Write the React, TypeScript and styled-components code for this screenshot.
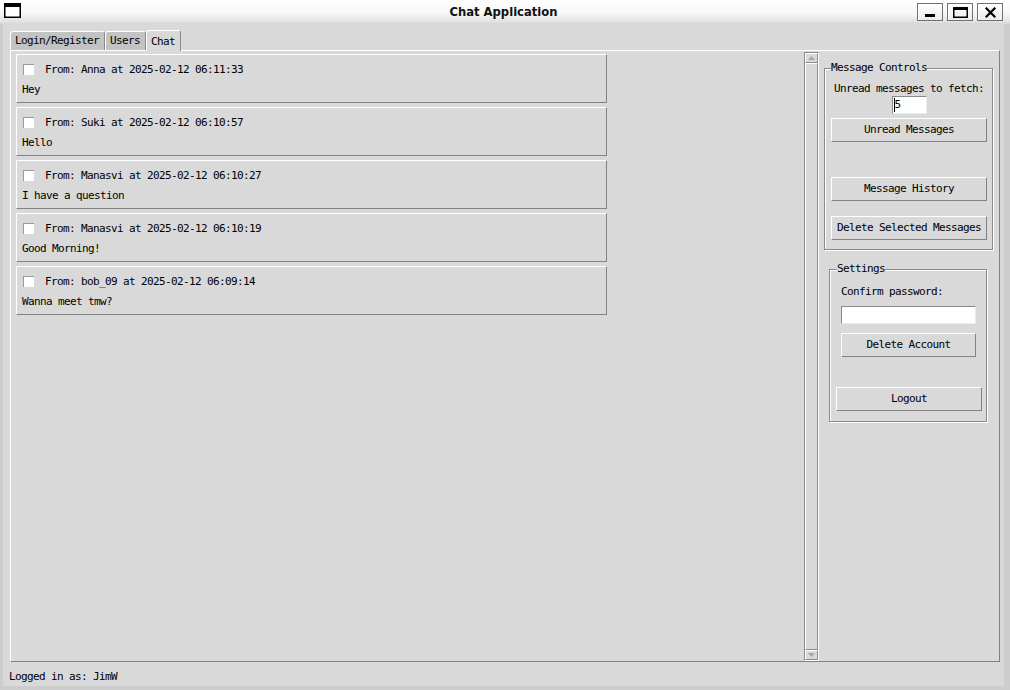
import React from "react";
import styled, { createGlobalStyle } from "styled-components";

const GlobalStyle = createGlobalStyle`
  html, body {
    margin: 0;
    padding: 0;
    background: #d9d9d9;
  }
  body {
    font-family: "DejaVu Sans Mono", "Liberation Mono", monospace;
  }
  * { box-sizing: border-box; }
`;

const TK_FONT = `"DejaVu Sans Mono", "Liberation Mono", monospace`;

const Window = styled.div`
  width: 1010px;
  height: 690px;
  display: flex;
  flex-direction: column;
  overflow: hidden;
  font-family: ${TK_FONT};
  font-size: 11px;
  letter-spacing: -0.62px;
  color: #000;
`;

const TitleBar = styled.div`
  height: 24px;
  flex: none;
  display: grid;
  grid-template-columns: 1fr auto 1fr;
  align-items: center;
  background: linear-gradient(#ffffff 0%, #f7f7f7 55%, #e2e2e2 90%, #d6d6d6 100%);
  padding: 0 7px 0 4px;
`;

const Title = styled.div`
  font-family: "DejaVu Sans", "Liberation Sans", sans-serif;
  font-weight: bold;
  font-size: 11.6px;
  letter-spacing: 0;
  color: #111;
`;

const Controls = styled.div`
  display: flex;
  justify-content: flex-end;
  gap: 4px;
`;

const CtlButton = styled.div`
  width: 26px;
  height: 18px;
  border: 1px solid #707070;
  background: linear-gradient(#ffffff, #ececec);
  box-shadow: inset 1px 1px 0 #fff;
  display: flex;
  align-items: center;
  justify-content: center;
`;

const Body = styled.div`
  flex: 1;
  display: flex;
  flex-direction: column;
  background: #d9d9d9;
  border-left: 3px solid #cdcdcd;
  border-right: 6px solid #cdcdcd;
  border-bottom: 4px solid #cdcdcd;
  padding-top: 7px;
`;

const Notebook = styled.div`
  margin-left: 7px;
  width: 990px;
  display: flex;
  flex-direction: column;
`;

const TabRow = styled.div`
  height: 19px;
  display: flex;
  align-items: flex-end;
`;

const Tab = styled.div<{ $active?: boolean }>`
  position: relative;
  z-index: ${(p) => (p.$active ? 1 : 0)};
  height: ${(p) => (p.$active ? 21 : 19)}px;
  margin-bottom: ${(p) => (p.$active ? -1 : 0)}px;
  padding: 0 5px 0 4px;
  border-top: 1px solid #fff;
  border-left: 1px solid #fff;
  border-right: 1px solid #8a8a8a;
  border-radius: 3px 3px 0 0;
  background: ${(p) => (p.$active ? "#d9d9d9" : "#c3c3c3")};
  line-height: ${(p) => (p.$active ? 19 : 17)}px;
  padding-top: ${(p) => (p.$active ? 1 : 0)}px;
  white-space: nowrap;
`;

const Pane = styled.div`
  height: 612px;
  display: flex;
  border-top: 1px solid #fff;
  border-left: 1px solid #fff;
  border-right: 1px solid #828282;
  border-bottom: 1px solid #828282;
`;

const MessageList = styled.div`
  width: 793px;
  padding: 3px 0 0 5px;
  display: flex;
  flex-direction: column;
  gap: 4px;
`;

const Card = styled.div`
  width: 591px;
  height: 49px;
  border: 1px solid;
  border-color: #fff #828282 #828282 #fff;
  padding: 4px 0 0 5px;
`;

const HeaderRow = styled.div`
  height: 20px;
  display: flex;
  align-items: center;
  white-space: pre;
`;

const CheckBox = styled.div`
  width: 11px;
  height: 11px;
  margin: 0 11px 0 1px;
  background: #fff;
  border-top: 1px solid #9a9a9a;
  border-left: 1px solid #9a9a9a;
`;

const MessageText = styled.div`
  height: 20px;
  line-height: 20px;
  padding-top: 1px;
  white-space: pre;
`;

const Scrollbar = styled.div`
  width: 15px;
  height: 609px;
  margin-top: 1px;
  display: flex;
  flex-direction: column;
  border: 1px solid;
  border-color: #8a8a8a #fff #fff #8a8a8a;
`;

const ArrowBox = styled.div`
  height: 10px;
  display: flex;
  align-items: center;
  justify-content: center;
  border: 1px solid;
  border-color: #fff #8a8a8a #8a8a8a #fff;
`;

const Slider = styled.div`
  flex: 1;
  border: 1px solid;
  border-color: #fff #8a8a8a #8a8a8a #fff;
`;

const SidePanel = styled.div`
  width: 180px;
  display: flex;
  flex-direction: column;
  padding-top: 17px;
`;

const LabelFrame = styled.div<{ $w: number; $ml: number; $mt?: number }>`
  position: relative;
  width: ${(p) => p.$w}px;
  margin-left: ${(p) => p.$ml}px;
  margin-top: ${(p) => p.$mt ?? 0}px;
  border: 1px solid #8a8a8a;
  box-shadow: inset 1px 1px 0 #fff, 1px 1px 0 #fff;
  display: flex;
  flex-direction: column;
`;

const Legend = styled.div<{ $left: number }>`
  position: absolute;
  top: -8px;
  left: ${(p) => p.$left}px;
  line-height: 14px;
  background: #d9d9d9;
  white-space: pre;
`;

const ControlsInner = styled.div`
  padding: 13px 5px 9px 6px;
  display: flex;
  flex-direction: column;
  align-items: stretch;
`;

const SettingsInner = styled.div`
  padding: 15px 0 10px 6px;
  display: flex;
  flex-direction: column;
  align-items: flex-start;
`;

const Caption = styled.div<{ $center?: boolean; $ml?: number }>`
  line-height: 14px;
  height: 14px;
  text-align: ${(p) => (p.$center ? "center" : "left")};
  margin-left: ${(p) => p.$ml ?? 0}px;
  white-space: pre;
`;

const Entry = styled.div<{ $w: number; $ml?: number; $mt?: number; $center?: boolean }>`
  width: ${(p) => p.$w}px;
  height: 18px;
  margin-top: ${(p) => p.$mt ?? 0}px;
  margin-left: ${(p) => p.$ml ?? 0}px;
  align-self: ${(p) => (p.$center ? "center" : "flex-start")};
  background: #fff;
  border: 1px solid;
  border-color: #8a8a8a #ececec #ececec #8a8a8a;
  line-height: 16px;
  padding-left: 1px;
  display: flex;
  align-items: center;
`;

const Cursor = styled.span`
  display: inline-block;
  width: 1px;
  height: 14px;
  background: #000;
`;

const Button = styled.div<{ $mt: number; $w?: number; $ml?: number }>`
  height: 24px;
  margin-top: ${(p) => p.$mt}px;
  margin-left: ${(p) => p.$ml ?? 0}px;
  width: ${(p) => (p.$w ? `${p.$w}px` : "auto")};
  border: 1px solid;
  border-color: #fff #828282 #828282 #fff;
  background: #d9d9d9;
  line-height: 22px;
  text-align: center;
  white-space: pre;
`;

const Status = styled.div`
  margin: 8px 0 0 6px;
  line-height: 14px;
  white-space: pre;
`;

const messages = [
  { from: "Anna", at: "2025-02-12 06:11:33", text: "Hey" },
  { from: "Suki", at: "2025-02-12 06:10:57", text: "Hello" },
  { from: "Manasvi", at: "2025-02-12 06:10:27", text: "I have a question" },
  { from: "Manasvi", at: "2025-02-12 06:10:19", text: "Good Morning!" },
  { from: "bob_09", at: "2025-02-12 06:09:14", text: "Wanna meet tmw?" },
];

const WindowIcon = () => (
  <svg width="17" height="15" viewBox="0 0 17 15">
    <rect x="0.75" y="0.75" width="15.5" height="13.5" fill="#fff" stroke="#000" strokeWidth="1.5" />
    <rect x="0" y="0" width="17" height="4" fill="#000" />
  </svg>
);

const MinIcon = () => (
  <svg width="12" height="12" viewBox="0 0 12 12">
    <rect x="1" y="8" width="10" height="3" fill="#000" />
  </svg>
);

const MaxIcon = () => (
  <svg width="15" height="11" viewBox="0 0 15 11">
    <rect x="0.75" y="0.75" width="13.5" height="9.5" fill="none" stroke="#000" strokeWidth="1.5" />
    <rect x="0" y="0" width="15" height="3" fill="#000" />
  </svg>
);

const CloseIcon = () => (
  <svg width="11" height="11" viewBox="0 0 11 11">
    <path d="M1.5 1.5 L9.5 9.5 M9.5 1.5 L1.5 9.5" stroke="#000" strokeWidth="2.2" strokeLinecap="square" />
  </svg>
);

const UpArrow = () => (
  <svg width="7" height="4" viewBox="0 0 7 4">
    <path d="M3.5 0 L7 4 L0 4 Z" fill="#a8a8a8" />
  </svg>
);

const DownArrow = () => (
  <svg width="7" height="4" viewBox="0 0 7 4">
    <path d="M0 0 L7 0 L3.5 4 Z" fill="#a8a8a8" />
  </svg>
);

export default function App() {
  return (
    <>
      <GlobalStyle />
      <Window>
        <TitleBar>
          <div>
            <WindowIcon />
          </div>
          <Title>Chat Application</Title>
          <Controls>
            <CtlButton>
              <MinIcon />
            </CtlButton>
            <CtlButton>
              <MaxIcon />
            </CtlButton>
            <CtlButton>
              <CloseIcon />
            </CtlButton>
          </Controls>
        </TitleBar>
        <Body>
          <Notebook>
            <TabRow>
              <Tab>Login/Register</Tab>
              <Tab>Users</Tab>
              <Tab $active>Chat</Tab>
            </TabRow>
            <Pane>
              <MessageList>
                {messages.map((m, i) => (
                  <Card key={i}>
                    <HeaderRow>
                      <CheckBox />
                      <span>{`From: ${m.from} at ${m.at}`}</span>
                    </HeaderRow>
                    <MessageText>{m.text}</MessageText>
                  </Card>
                ))}
              </MessageList>
              <Scrollbar>
                <ArrowBox>
                  <UpArrow />
                </ArrowBox>
                <Slider />
                <ArrowBox>
                  <DownArrow />
                </ArrowBox>
              </Scrollbar>
              <SidePanel>
                <LabelFrame $w={169} $ml={5}>
                  <Legend $left={6}>Message Controls</Legend>
                  <ControlsInner>
                    <Caption $center>Unread messages to fetch:</Caption>
                    <Entry $w={35} $center>
                      <Cursor />
                      5
                    </Entry>
                    <Button $mt={4}>Unread Messages</Button>
                    <Button $mt={35}>Message History</Button>
                    <Button $mt={15}>Delete Selected Messages</Button>
                  </ControlsInner>
                </LabelFrame>
                <LabelFrame $w={158} $ml={10} $mt={19}>
                  <Legend $left={7}>Settings</Legend>
                  <SettingsInner>
                    <Caption $ml={5}>Confirm password:</Caption>
                    <Entry $w={135} $ml={5} $mt={7} />
                    <Button $mt={9} $w={135} $ml={5}>
                      Delete Account
                    </Button>
                    <Button $mt={30} $w={146}>
                      Logout
                    </Button>
                  </SettingsInner>
                </LabelFrame>
              </SidePanel>
            </Pane>
          </Notebook>
          <Status>Logged in as: JimW</Status>
        </Body>
      </Window>
    </>
  );
}
